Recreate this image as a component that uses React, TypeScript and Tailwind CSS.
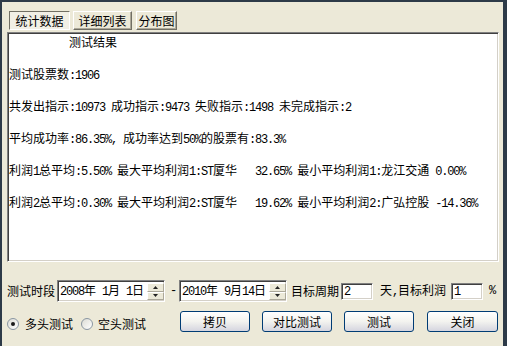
import React from "react";

function T({ s }: { s: string }) {
  const parts = s.split(/([\x00-\x7f]+)/).filter((p) => p.length > 0);
  return (
    <>
      {parts.map((p, i) =>
        /^[\x00-\x7f]+$/.test(p) ? (
          <span
            key={i}
            className="whitespace-pre font-['Liberation_Mono',monospace] tracking-[-1.2px]"
          >
            {p}
          </span>
        ) : (
          <span key={i} className="font-['Noto_Sans_CJK_SC',sans-serif]">
            {p}
          </span>
        )
      )}
    </>
  );
}

function Spin() {
  return (
    <div className="ml-auto flex h-[17px] w-[17px] flex-col">
      <div className="flex h-[9px] items-center justify-center border border-t-white border-l-white border-b-[#aca899] border-r-[#aca899] bg-[#ece9d8]">
        <svg width="5" height="3" viewBox="0 0 5 3">
          <path d="M2.5 0 L5 3 L0 3 Z" fill="#222" />
        </svg>
      </div>
      <div className="flex h-[8px] items-center justify-center border border-t-white border-l-white border-b-[#aca899] border-r-[#aca899] bg-[#ece9d8]">
        <svg width="5" height="3" viewBox="0 0 5 3">
          <path d="M0 0 L5 0 L2.5 3 Z" fill="#222" />
        </svg>
      </div>
    </div>
  );
}

const sunken =
  "border border-t-[#808080] border-l-[#808080] border-r-white border-b-white shadow-[inset_1px_1px_0_#404040,inset_-1px_-1px_0_#d4d0c8]";

function DateBox({ v }: { v: string }) {
  return (
    <div className={`flex h-[22px] w-[108px] items-center bg-white ${sunken}`}>
      <span className="pl-[2px] leading-[16px]">
        <T s={v} />
      </span>
      <Spin />
    </div>
  );
}

function Edit({ v }: { v: string }) {
  return (
    <div className={`flex h-[17px] w-[32px] items-center bg-white pl-[2px] ${sunken}`}>
      <span className="leading-[14px]">
        <T s={v} />
      </span>
    </div>
  );
}

function Btn({ label, cls }: { label: string; cls: string }) {
  return (
    <div
      className={`flex h-[21px] items-center justify-center rounded-[3px] border border-[#003c74] bg-linear-to-b from-white via-[#f3f3ef] to-[#d5d5df] ${cls}`}
    >
      <span className="leading-[14px]">{label}</span>
    </div>
  );
}

function Radio({ on }: { on: boolean }) {
  return (
    <span className="flex h-[12px] w-[12px] items-center justify-center rounded-full border border-[#8a96a2] bg-linear-to-br from-[#dcdcd5] to-white">
      {on && <span className="h-[4px] w-[4px] rounded-full bg-[#1a1a1a]" />}
    </span>
  );
}

const lines = [
  "          测试结果",
  "",
  "测试股票数:1906",
  "",
  "共发出指示:10973 成功指示:9473 失败指示:1498 未完成指示:2",
  "",
  "平均成功率:86.35%, 成功率达到50%的股票有:83.3%",
  "",
  "利润1总平均:5.50% 最大平均利润1:ST厦华   32.65% 最小平均利润1:龙江交通 0.00%",
  "",
  "利润2总平均:0.30% 最大平均利润2:ST厦华   19.62% 最小平均利润2:广弘控股 -14.36%",
];

export default function App() {
  return (
    <div className="h-[346px] w-[507px] overflow-hidden border-t-2 border-l-2 border-r-4 border-[#2d3a48] bg-[#ece9d8] px-[5px] text-[12px] text-black font-['Noto_Sans_CJK_SC',sans-serif]">
      {/* tabs */}
      <div className="mt-[9px] flex pl-[2px]">
        <div className="flex h-[19px] w-[61px] items-center justify-center border border-t-[#716f64] border-l-[#716f64] border-b-white border-r-white bg-[#f1efe5]">
          <span className="leading-[14px]">统计数据</span>
        </div>
        <div className="ml-[3px] flex h-[19px] w-[59px] items-center justify-center border border-t-white border-l-white border-b-[#716f64] border-r-[#716f64] shadow-[inset_-1px_-1px_0_#aca899]">
          <span className="leading-[14px]">详细列表</span>
        </div>
        <div className="ml-[4px] flex h-[19px] w-[41px] items-center justify-center border border-t-white border-l-white border-b-[#716f64] border-r-[#716f64] shadow-[inset_-1px_-1px_0_#aca899]">
          <span className="leading-[14px]">分布图</span>
        </div>
      </div>

      {/* result box */}
      <div className={`mt-[2px] h-[230px] w-[492px] bg-white pt-[1px] pl-[1px] ${sunken}`}>
        {lines.map((l, i) => (
          <div key={i} className="h-[16px] whitespace-pre leading-[16px]">
            {l ? <T s={l} /> : null}
          </div>
        ))}
      </div>

      {/* date row */}
      <div className="mt-[18px] flex h-[22px] items-center">
        <span className="w-[50px]">测试时段</span>
        <DateBox v="2008年 1月 1日" />
        <span className="ml-[5px] w-[9px] font-['Liberation_Mono',monospace]">-</span>
        <DateBox v="2010年 9月14日" />
        <span className="ml-[4px] w-[50px]">目标周期</span>
        <Edit v="2" />
        <span className="ml-[7px] w-[71px] leading-[16px]">
          <T s="天,目标利润" />
        </span>
        <Edit v="1" />
        <span className="ml-[6px] font-['Liberation_Mono',monospace] tracking-[-1.2px]">%</span>
      </div>

      {/* bottom row */}
      <div className="mt-[9px] flex items-start">
        <div className="mt-[2px] flex h-[21px] items-center">
          <Radio on />
          <span className="ml-[6px] w-[56px]">多头测试</span>
          <Radio on={false} />
          <span className="ml-[5px]">空头测试</span>
        </div>
        <div className="ml-auto flex">
          <Btn label="拷贝" cls="w-[70px]" />
          <Btn label="对比测试" cls="ml-[12px] w-[70px]" />
          <Btn label="测试" cls="ml-[12px] w-[70px]" />
          <Btn label="关闭" cls="ml-[13px] w-[71px]" />
        </div>
      </div>
    </div>
  );
}
